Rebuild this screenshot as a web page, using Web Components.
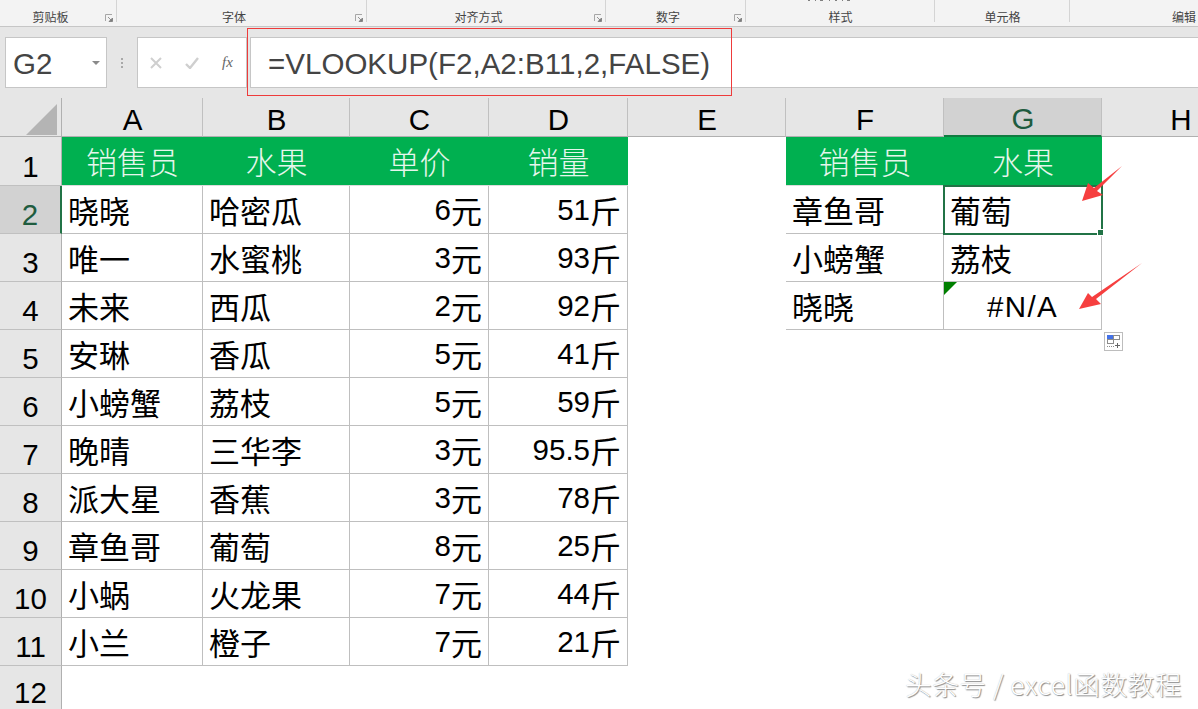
<!DOCTYPE html>
<html lang="zh">
<head>
<meta charset="utf-8">
<title>VLOOKUP</title>
<style>
  html, body { margin: 0; height: 100%; overflow: hidden; background: #fff; }
  body { position: relative; width: 1198px; height: 709px; font-family: "Liberation Sans", "Noto Sans CJK SC", sans-serif; }
</style>
</head>
<body>
<xl-ribbon></xl-ribbon>
<xl-formula-bar cell="G2" formula="=VLOOKUP(F2,A2:B11,2,FALSE)"></xl-formula-bar>
<xl-sheet></xl-sheet>
<xl-overlay></xl-overlay>
<script>
const CELL_FONT = '"Liberation Sans", "Noto Sans CJK SC", sans-serif';

// chinese glyphs run a bit bigger than the latin ones in the reference
const wrapCjk = text => text.replace(/[\u4e00-\u9fff]+/g, m => `<span class="z">${m}</span>`);

class XlRibbon extends HTMLElement {
  constructor() {
    super();
    this.attachShadow({ mode: 'open' });
  }

  connectedCallback() {
    const groups = [
      ['剪贴板', 117, true], ['字体', 250, true], ['对齐方式', 239, true], ['数字', 140, true],
      ['样式', 189, false], ['单元格', 135, false], ['编辑', 228, false]
    ];
    const launcher = `<svg class="launch" width="8" height="8" viewBox="0 0 8 8"><path d="M.5 7V.5H7" fill="none" stroke="#a6a6a6"/><path d="M3 3l3.5 3.5M7.5 4v3.500H4z" fill="#7b7b7b" stroke="#7b7b7b" stroke-width=".8"/></svg>`;
    this.shadowRoot.innerHTML = `
      <style>
        :host {
          display: flex;
          height: 26px;
          width: 1198px;
          background: #f3f3f3;
          border-bottom: 1px solid #c6c6c6;
          overflow: hidden;
          font: 12px "Noto Sans CJK SC", sans-serif;
          color: #444;
        }
        .group {
          position: relative;
          flex: none;
          box-sizing: border-box;
          height: 26px;
          background: linear-gradient(#d4d4d4, #d4d4d4) right top / 1px 22px no-repeat;
          display: flex;
          justify-content: center;
          align-items: flex-end;
          line-height: 18px;
        }
        .group.has-launcher { padding-right: 16px; }
        .group:last-child { background: none; }
        .launch { position: absolute; right: 4px; bottom: 4px; }
      </style>
      ${groups.map(([name, w, l]) => `<div class="group ${l ? 'has-launcher' : ''}" style="width:${w}px">${name}${l ? launcher : ''}</div>`).join('')}
    `;
  }
}

class XlFormulaBar extends HTMLElement {
  constructor() {
    super();
    this.attachShadow({ mode: 'open' });
  }

  connectedCallback() {
    this.shadowRoot.innerHTML = `
      <style>
        :host {
          display: flex;
          box-sizing: border-box;
          height: 71px;
          width: 1198px;
          padding: 10px 0 10px 5px;
          background: #e6e6e6;
          font-family: ${CELL_FONT};
          color: #444;
        }
        .box {
          box-sizing: border-box;
          background: #fff;
          border: 1px solid #c6c6c6;
          height: 51px;
          display: flex;
          align-items: center;
        }
        .name {
          width: 102px;
          justify-content: space-between;
          padding: 3px 6px 0 7px;
          font-size: 29.500px;
        }
        .arrow { width: 0; height: 0; border: 4px solid transparent; border-top: 4px solid #8a8a8a; border-bottom: 0; margin-top: -3px; }
        .dots { width: 30px; display: flex; flex-direction: column; align-items: center; justify-content: center; gap: 2px; }
        .dots i { width: 2px; height: 2px; background: #a8a8a8; }
        .btns { width: 110px; padding-left: 12px; gap: 23px; }
        .btns svg { display: block; }
        .fx { font: italic 15px "Liberation Serif", serif; color: #666; }
        .input {
          flex: 1;
          margin-left: 3px;
          border-right: 0;
          padding: 3px 0 0 17px;
          font-size: 29.500px;
          letter-spacing: .03px;
          white-space: nowrap;
        }
      </style>
      <div class="box name"><span>${this.getAttribute('cell')}</span><span class="arrow"></span></div>
      <div class="dots"><i></i><i></i><i></i></div>
      <div class="box btns">
        <svg width="12" height="12" viewBox="0 0 12 12"><path d="M1 1l10 10M11 1L1 11" stroke="#cfcfcf" stroke-width="2"/></svg>
        <svg width="14" height="12" viewBox="0 0 14 12"><path d="M1 7l4 4 8-10" fill="none" stroke="#cfcfcf" stroke-width="2.400"/></svg>
        <span class="fx">fx</span>
      </div>
      <div class="box input">${this.getAttribute('formula')}</div>
    `;
  }
}

class XlSheet extends HTMLElement {
  constructor() {
    super();
    this.attachShadow({ mode: 'open' });
  }

  connectedCallback() {
    const head = ['销售员', '水果', '单价', '销量'];
    const rows = [
      ['晓晓', '哈密瓜', '6元', '51斤'], ['唯一', '水蜜桃', '3元', '93斤'], ['未来', '西瓜', '2元', '92斤'],
      ['安琳', '香瓜', '5元', '41斤'], ['小螃蟹', '荔枝', '5元', '59斤'], ['晚晴', '三华李', '3元', '95.5斤'],
      ['派大星', '香蕉', '3元', '78斤'], ['章鱼哥', '葡萄', '8元', '25斤'], ['小蜗', '火龙果', '7元', '44斤'],
      ['小兰', '橙子', '7元', '21斤']
    ];
    const side = [['章鱼哥', '葡萄'], ['小螃蟹', '荔枝'], ['晓晓', '#N/A']];
    const cols = 'ABCDEFGH'.split('');
    let html = `<div class="corner"><svg width="32" height="32" viewBox="0 0 32 32"><path d="M31 1v31H0z" fill="#b4b4b4"/></svg></div>`;
    cols.forEach(c => { html += `<div class="col ${c === 'G' ? 'sel' : ''}">${c}</div>`; });

    for (let r = 1; r <= 12; r++) {
      html += `<div class="row ${r === 2 ? 'sel' : ''}">${r}</div>`;
      for (let c = 0; c < 8; c++) {
        let text = '', cls = 'cell';
        if (r === 1 && c < 4) { text = head[c]; cls += ' th'; }
        else if (r >= 2 && r <= 11 && c < 4) {
          text = rows[r - 2][c];
          cls += ' line' + (c > 1 ? ' num' : '');
        }
        else if (r === 1 && (c === 5 || c === 6)) { text = head[c - 5]; cls += ' th'; }
        else if (r >= 2 && r <= 4 && (c === 5 || c === 6)) {
          text = side[r - 2][c - 5];
          cls += ' line';
          if (r === 2 && c === 6) cls += ' active';
          if (r === 4 && c === 6) cls += ' err';
        }
        html += `<div class="${cls}">${wrapCjk(text)}</div>`;
      }
    }

    this.shadowRoot.innerHTML = `
      <style>
        :host {
          display: block;
          width: 1198px;
          height: 611px;
          overflow: hidden;
          font: 29.500px ${CELL_FONT};
          color: #000;
        }
        .grid {
          display: grid;
          grid-template-columns: 62px 141px 147px 139px 139px 158px 158px 158px 158px;
          grid-template-rows: 39px 49px repeat(10, 48px) 44px;
        }
        .z { font-size: 31px; font-family: "Noto Sans CJK SC", sans-serif; }
        .corner, .col, .row { box-sizing: border-box; background: #e6e6e6; display: flex; }
        .corner { border-right: 1px solid #b0b0b0; border-bottom: 1px solid #b0b0b0; align-items: flex-end; justify-content: flex-end; padding: 0 3px 1px 0; }
        .corner svg { display: block; }
        .col {
          align-items: center;
          justify-content: center;
          padding: 5px 0 0 1px;
          border-right: 1px solid #c0c0c0;
          border-bottom: 1px solid #b0b0b0;
        }
        .row {
          align-items: center;
          justify-content: center;
          padding-top: 11px;
          border-right: 1px solid #b0b0b0;
          border-bottom: 1px solid #c0c0c0;
        }
        .sel { background: #d2d2d2; color: #1f5c3f; }
        .col.sel { border-bottom: 2px solid #107c41; }
        .row.sel { border-right: 2px solid #217346; }
        .cell {
          box-sizing: border-box;
          position: relative;
          display: flex;
          align-items: center;
          padding: 0 6px;
          white-space: nowrap;
          background: #fff;
        }
        .th {
          background: #00b050;
          background-clip: padding-box;
          color: #e6f6ec;
          justify-content: center;
          font-weight: 300;
          border-bottom: 1px solid #dcdcdc;
          padding-bottom: 2px;
        }
        .line { border-right: 1px solid #bfbfbf; border-bottom: 1px solid #bfbfbf; }
        .num { justify-content: flex-end; }
        .active { outline: 2px solid #217346; outline-offset: -1px; z-index: 1; }
        .active::after {
          content: "";
          position: absolute;
          right: -3px;
          bottom: -3px;
          width: 5px;
          height: 5px;
          background: #217346;
          border: 1px solid #fff;
        }
        .err { justify-content: center; letter-spacing: 1.400px; padding-top: 3px; }
        .err::before {
          content: "";
          position: absolute;
          left: 0;
          top: 0;
          border-top: 13px solid #007f00;
          border-right: 13px solid transparent;
        }
      </style>
      <div class="grid">${html}</div>
    `;
  }
}

class XlOverlay extends HTMLElement {
  constructor() {
    super();
    this.attachShadow({ mode: 'open' });
  }

  connectedCallback() {
    this.shadowRoot.innerHTML = `
      <style>
        :host { position: absolute; inset: 0; z-index: 2; display: block; pointer-events: none; }
        svg { position: absolute; left: 0; top: 0; }
        .mark {
          position: absolute;
          left: 905px;
          top: 664px;
          font: 26.700px "Noto Sans CJK SC", sans-serif;
          font-weight: 300;
          letter-spacing: .5px;
          color: #fff;
          white-space: nowrap;
          text-shadow: 1px 1px 1px #8a8a8a, 0 0 1px #b5b5b5;
        }
      </style>
      <svg width="1198" height="709" viewBox="0 0 1198 709">
        <path d="M808 .5h46" stroke="#808080" stroke-dasharray="2 5 1 4 3 6 1 5"/>
        <rect x="247.500" y="28.500" width="484" height="67" fill="none" stroke="#ee3b3b"/>
        <path d="M1122 166L1097 191 1103 195 1082 201 1088 183 1094 188z" fill="#f63f3f"/>
        <path d="M1142 263L1096 299 1101 304 1079 309 1088 293 1092 297z" fill="#f63f3f"/>
        <g transform="translate(1104 332)">
          <rect x=".5" y=".5" width="18" height="18" fill="#fff" stroke="#bdbdbd"/>
          <rect x="3.500" y="3.500" width="6" height="4" fill="#4472e8" stroke="#4472e8"/>
          <rect x="9.500" y="3.500" width="6" height="4" fill="#fff" stroke="#8c8c8c"/>
          <rect x="3.500" y="7.500" width="6" height="4" fill="#fff" stroke="#8c8c8c"/>
          <path d="M3 14.500h7" stroke="#8c8c8c" stroke-dasharray="1 1"/>
          <path d="M11 13.500h5M13.500 11v5" stroke="#666"/>
        </g>
      </svg>
      <div class="mark">头条号 / excel函数教程</div>
    `;
  }
}

customElements.define('xl-ribbon', XlRibbon);
customElements.define('xl-formula-bar', XlFormulaBar);
customElements.define('xl-sheet', XlSheet);
customElements.define('xl-overlay', XlOverlay);
</script>
</body>
</html>
